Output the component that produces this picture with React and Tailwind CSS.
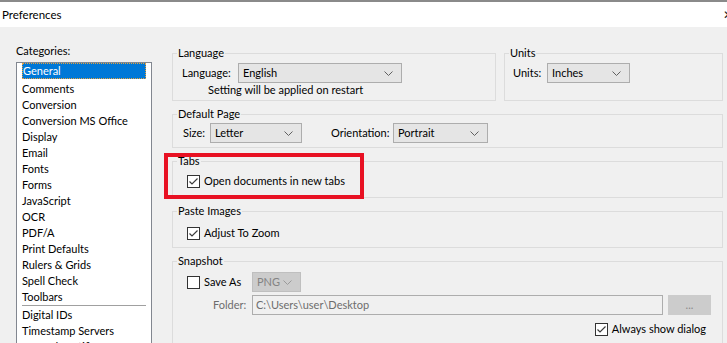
const categories = [
  "Comments",
  "Conversion",
  "Conversion MS Office",
  "Display",
  "Email",
  "Fonts",
  "Forms",
  "JavaScript",
  "OCR",
  "PDF/A",
  "Print Defaults",
  "Rulers & Grids",
  "Spell Check",
  "Toolbars",
];

function Chevron({ color = "#606060" }) {
  return (
    <svg width="9" height="5" viewBox="0 0 9 5" className="shrink-0">
      <polyline points="0.5,0.5 4.5,4.5 8.5,0.5" fill="none" stroke={color} strokeWidth="1" />
    </svg>
  );
}

function Combo({ value, className, disabled }) {
  return (
    <div
      className={
        "h-[20px] flex items-center justify-between pl-[4px] pr-[8px] border " +
        (disabled
          ? "bg-[#cccccc] border-[#bfbfbf] text-[#838383] "
          : "bg-[#e5e5e5] border-[#adadad] text-black ") +
        className
      }
    >
      <span>{value}</span>
      <Chevron color={disabled ? "#9a9a9a" : "#606060"} />
    </div>
  );
}

function Check({ checked }) {
  return (
    <div className="w-[13px] h-[13px] border border-[#333333] bg-white shrink-0 flex items-center justify-center">
      {checked && (
        <svg width="11" height="11" viewBox="0 0 11 11">
          <polyline points="1.5,5.5 4,8 9.5,2.5" fill="none" stroke="#3c3c3c" strokeWidth="1.2" />
        </svg>
      )}
    </div>
  );
}

function Group({ title, className, children }) {
  return (
    <fieldset className={"border border-[#dcdcdc] " + className}>
      <legend className="ml-[4px] px-[1px] leading-[14px] text-black">{title}</legend>
      {children}
    </fieldset>
  );
}

export default function App() {
  return (
    <div className="relative w-[727px] h-[343px] overflow-hidden whitespace-nowrap bg-[#f0f0f0] font-['Lato','Liberation_Sans',sans-serif] text-[11px] leading-[14px] text-black">
      {/* title bar */}
      <div className="h-[27px] bg-white border-t-[2px] border-[#8a8a8a] flex items-center justify-between pl-[2px]">
        <span className="text-[11.5px]">Preferences</span>
        <span className="text-[12px] text-[#222] mr-[-6px]">✕</span>
      </div>

      <div className="flex">
        {/* categories */}
        <div className="ml-[16px] w-[136px]">
          <div className="mt-[17px]">Categories:</div>
          <div className="mt-[4px] h-[300px] bg-white border border-[#828790] px-[5px]">
            <div className="h-[16px] mb-[2px] bg-[#0078d7] text-white border border-dotted border-[#e8a33c] flex items-center">
              General
            </div>
            {categories.map((c) => (
              <div key={c} className="h-[16px] flex items-center">
                {c}
              </div>
            ))}
            <div className="h-px bg-[#a0a0a0]" />
            <div className="h-[17px] pt-[1px] flex items-center">Digital IDs</div>
            <div className="h-[16px] flex items-center">Timestamp Servers</div>
            <div className="h-[16px] flex items-center">Trusted Certificates</div>
          </div>
        </div>

        {/* settings */}
        <div className="ml-[20px] w-[551px] mt-[19px] flex flex-col">
          <div className="flex gap-[8px]">
            <Group title="Language" className="w-[324px] h-[55px]">
              <div className="mt-[3px] pl-[9px] flex items-center">
                <span className="w-[56px]">Language:</span>
                <Combo value="English" className="w-[164px]" />
              </div>
              <div className="pl-[35px]">Setting will be applied on restart</div>
            </Group>
            <Group title="Units" className="w-[219px] h-[55px]">
              <div className="mt-[3px] pl-[8px] flex items-center">
                <span className="w-[34px]">Units:</span>
                <Combo value="Inches" className="w-[83px]" />
              </div>
            </Group>
          </div>

          <Group title="Default Page" className="mt-[6px] h-[41px]">
            <div className="mt-[2px] pl-[10px] flex items-center">
              <span className="w-[27px]">Size:</span>
              <Combo value="Letter" className="w-[92px]" />
              <span className="ml-[29px] w-[62px]">Orientation:</span>
              <Combo value="Portrait" className="w-[95px]" />
            </div>
          </Group>

          <Group title="Tabs" className="mt-[6px] h-[44px]">
            <div className="mt-[6px] pl-[14px] flex items-center gap-[4px]">
              <Check checked />
              <span>Open documents in new tabs</span>
            </div>
          </Group>

          <Group title="Paste Images" className="mt-[6px] h-[44px]">
            <div className="mt-[8px] pl-[14px] flex items-center gap-[4px]">
              <Check checked />
              <span>Adjust To Zoom</span>
            </div>
          </Group>

          <Group title="Snapshot" className="mt-[6px] h-[120px]">
            <div className="mt-[4px] pl-[14px] flex items-center">
              <Check />
              <span className="ml-[4px] w-[48px]">Save As</span>
              <Combo value="PNG" className="w-[49px] pr-[6px]" disabled />
            </div>
            <div className="mt-[3px] pl-[40px] flex items-center">
              <span className="w-[39px] text-[#6d6d6d]">Folder:</span>
              <div className="w-[411px] h-[20px] border border-[#adadad] flex items-center pl-[3px] text-[#6d6d6d]">
                C:\Users\user\Desktop
              </div>
              <div className="ml-[5px] w-[43px] h-[20px] bg-[#cccccc] border border-[#cccccc] flex items-center justify-center text-[#8a8a8a] text-[11px]">
                ...
              </div>
            </div>
            <div className="mt-[7px] pr-[16px] flex items-center justify-end gap-[4px]">
              <Check checked />
              <span>Always show dialog</span>
            </div>
          </Group>
        </div>
      </div>

      {/* red highlight annotation */}
      <div className="absolute left-[164px] top-[153px] w-[200px] h-[46px] border-[4px] border-[#e81123] pointer-events-none" />
    </div>
  );
}
